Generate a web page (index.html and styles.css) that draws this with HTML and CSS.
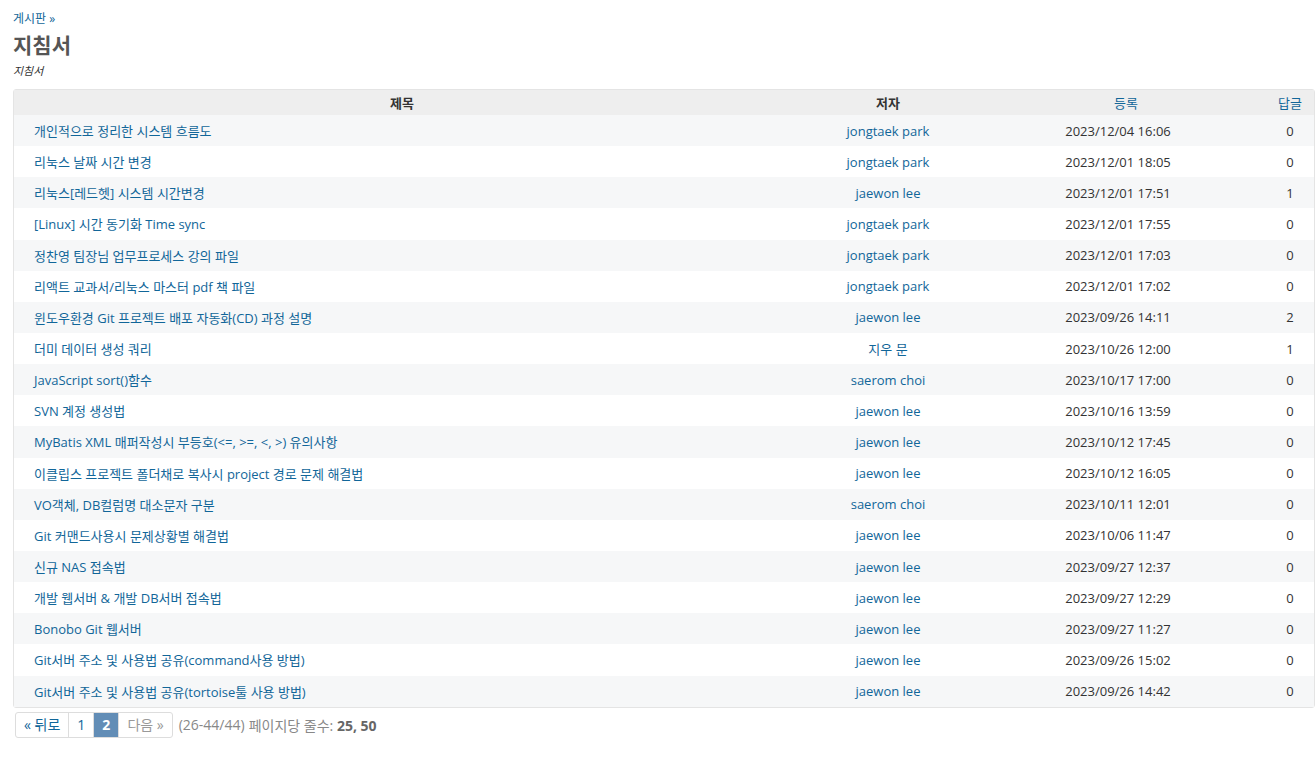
FILE: index.html
```html
<html>
<head>
<meta charset="utf-8">
<link rel="stylesheet" href="styles.css">
</head>
<body>
<div id="content">
    <p class="breadcrumb"><a href="#">게시판</a> &raquo;</p>
    <h2>지침서</h2>
    <p class="board-desc"><em>지침서</em></p>

    <table class="list messages">
        <thead>
            <tr>
                <th class="subject">제목</th>
                <th class="author">저자</th>
                <th class="created"><a href="#">등록</a></th>
                <th class="replies"><a href="#">답글</a></th>
            </tr>
        </thead>
        <tbody id="rows"></tbody>
    </table>

    <!-- pagination -->
    <div class="pagination">
        <ul class="pages">
            <li class="previous"><a href="#">&laquo; 뒤로</a></li>
            <li><a href="#">1</a></li>
            <li class="current"><span>2</span></li>
            <li class="next gap"><span>다음 &raquo;</span></li>
        </ul>
        <span class="items">(26-44/44)</span>
        <span class="per-page">페이지당 줄수: <b>25, 50</b></span>
    </div>
</div>

<script>
var data = [
    ["개인적으로 정리한 시스템 흐름도", "jongtaek park", "2023/12/04 16:06", 0],
    ["리눅스 날짜 시간 변경", "jongtaek park", "2023/12/01 18:05", 0],
    ["리눅스[레드헷] 시스템 시간변경", "jaewon lee", "2023/12/01 17:51", 1],
    ["[Linux] 시간 동기화 Time sync", "jongtaek park", "2023/12/01 17:55", 0],
    ["정찬영 팀장님 업무프로세스 강의 파일", "jongtaek park", "2023/12/01 17:03", 0],
    ["리액트 교과서/리눅스 마스터 pdf 책 파일", "jongtaek park", "2023/12/01 17:02", 0],
    ["윈도우환경 Git 프로젝트 배포 자동화(CD) 과정 설명", "jaewon lee", "2023/09/26 14:11", 2],
    ["더미 데이터 생성 쿼리", "지우 문", "2023/10/26 12:00", 1],
    ["JavaScript sort()함수", "saerom choi", "2023/10/17 17:00", 0],
    ["SVN 계정 생성법", "jaewon lee", "2023/10/16 13:59", 0],
    ["MyBatis XML 매퍼작성시 부등호(<=, >=, <, >) 유의사항", "jaewon lee", "2023/10/12 17:45", 0],
    ["이클립스 프로젝트 폴더채로 복사시 project 경로 문제 해결법", "jaewon lee", "2023/10/12 16:05", 0],
    ["VO객체, DB컬럼명 대소문자 구분", "saerom choi", "2023/10/11 12:01", 0],
    ["Git 커맨드사용시 문제상황별 해결법", "jaewon lee", "2023/10/06 11:47", 0],
    ["신규 NAS 접속법", "jaewon lee", "2023/09/27 12:37", 0],
    ["개발 웹서버 & 개발 DB서버 접속법", "jaewon lee", "2023/09/27 12:29", 0],
    ["Bonobo Git 웹서버", "jaewon lee", "2023/09/27 11:27", 0],
    ["Git서버 주소 및 사용법 공유(command사용 방법)", "jaewon lee", "2023/09/26 15:02", 0],
    ["Git서버 주소 및 사용법 공유(tortoise툴 사용 방법)", "jaewon lee", "2023/09/26 14:42", 0]
];

var tbody = document.getElementById("rows");
for (var i = 0; i < data.length; i++) {
    var tr = document.createElement("tr");
    tr.className = (i % 2 == 0) ? "odd" : "even";

    var td1 = document.createElement("td");
    td1.className = "subject";
    var a1 = document.createElement("a");
    a1.href = "#";
    a1.textContent = data[i][0];
    td1.appendChild(a1);

    var td2 = document.createElement("td");
    td2.className = "author";
    var a2 = document.createElement("a");
    a2.href = "#";
    a2.textContent = data[i][1];
    td2.appendChild(a2);

    var td3 = document.createElement("td");
    td3.className = "created";
    td3.textContent = data[i][2];

    var td4 = document.createElement("td");
    td4.className = "replies";
    td4.textContent = data[i][3];

    tr.appendChild(td1);
    tr.appendChild(td2);
    tr.appendChild(td3);
    tr.appendChild(td4);
    tbody.appendChild(tr);
}
</script>
</body>
</html>
```

FILE: styles.css
```css
body {
    margin: 0;
    font-family: "Open Sans", "Noto Sans CJK KR", sans-serif;
    font-size: 13px;
    color: #333;
    background: #fff;
}

a {
    color: #169;
    text-decoration: none;
}

#content {
    padding: 11px 0 0 13px;
}

.breadcrumb {
    margin: 0;
    font-size: 12px;
    color: #169;
    line-height: 16px;
}

h2 {
    margin: 4px 0 0 0;
    font-size: 21px;
    line-height: 28px;
    color: #555;
    font-weight: bold;
}

.board-desc {
    margin: 5px 0 0 0;
    font-size: 11px;
    line-height: 14px;
}

table.list {
    margin-top: 11px;
    width: 100%;
    font-size: 13px;
    border: 1px solid #e4e4e4;
    border-radius: 3px;
    border-collapse: separate;
    border-spacing: 0;
}

table.list th {
    background-color: #eee;
    padding: 0 4px;
    height: 25px;
    font-weight: bold;
    color: #333;
}

table.list th a {
    font-weight: normal;
}

table.list td {
    height: 31.15px;
    padding: 0 4px;
    text-align: center;
    vertical-align: middle;
}

table.list tr.odd td {
    background-color: #f6f7f8;
}

table.list td.subject {
    text-align: left;
    padding-left: 20px;
}

th.author {
    width: 188px;
}

th.created {
    width: 272px;
}

table.list td.created {
    padding-right: 20px;
}

th.replies {
    width: 40px;
}

.pagination {
    margin-top: 4px;
    display: flex;
    align-items: center;
    padding-left: 2px;
    font-size: 14px;
    color: #888;
}

ul.pages {
    margin: 0;
    padding: 0;
    list-style: none;
    display: flex;
    border: 1px solid #ddd;
    border-radius: 3px;
}

ul.pages li {
    border-left: 1px solid #ddd;
}

ul.pages li:first-child {
    border-left: none;
}

ul.pages li a, ul.pages li span {
    display: block;
    height: 24px;
    line-height: 24px;
    padding: 0 8px;
}

ul.pages li.current span {
    background-color: #628db6;
    color: #fff;
    font-weight: bold;
}

ul.pages li.gap span {
    color: #999;
}

.items {
    margin-left: 6px;
}

.per-page {
    margin-left: 4px;
}

.per-page b {
    color: #666;
}
```
